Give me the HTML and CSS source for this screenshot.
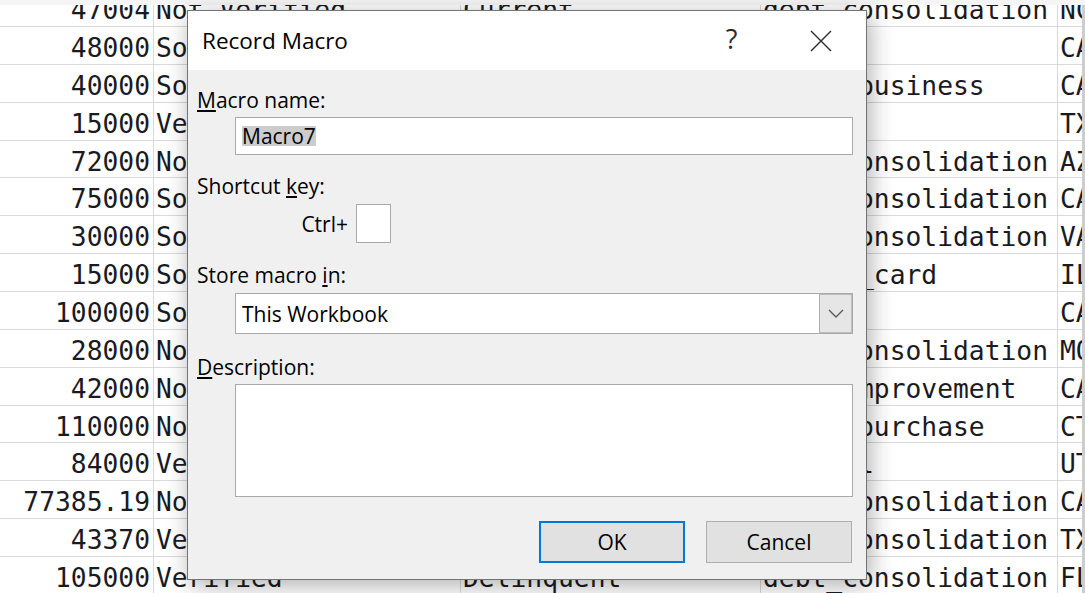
FILE: index.html
```html
<!DOCTYPE html>
<html>
<head>
<meta charset="utf-8">
<link rel="stylesheet" href="styles.css">
</head>
<body>
<div class="app">
  <div class="topstrip"></div>
  <div class="sheet-wrap">
    <div class="sheet">
      <div class="cell num">47004</div><div class="cell">Not Verified</div><div class="cell">Current</div><div class="cell">debt_consolidation</div><div class="cell last">NC</div>
      <div class="cell num">48000</div><div class="cell">Source Verified</div><div class="cell">Current</div><div class="cell">car</div><div class="cell last">CA</div>
      <div class="cell num">40000</div><div class="cell">Source Verified</div><div class="cell">Current</div><div class="cell">small_business</div><div class="cell last">CA</div>
      <div class="cell num">15000</div><div class="cell">Verified</div><div class="cell">Current</div><div class="cell">other</div><div class="cell last">TX</div>
      <div class="cell num">72000</div><div class="cell">Not Verified</div><div class="cell">Current</div><div class="cell">debt_consolidation</div><div class="cell last">AZ</div>
      <div class="cell num">75000</div><div class="cell">Source Verified</div><div class="cell">Current</div><div class="cell">debt_consolidation</div><div class="cell last">CA</div>
      <div class="cell num">30000</div><div class="cell">Source Verified</div><div class="cell">Current</div><div class="cell">debt_consolidation</div><div class="cell last">VA</div>
      <div class="cell num">15000</div><div class="cell">Source Verified</div><div class="cell">Current</div><div class="cell">credit_card</div><div class="cell last">IL</div>
      <div class="cell num">100000</div><div class="cell">Source Verified</div><div class="cell">Current</div><div class="cell">other</div><div class="cell last">CA</div>
      <div class="cell num">28000</div><div class="cell">Not Verified</div><div class="cell">Current</div><div class="cell">debt_consolidation</div><div class="cell last">MO</div>
      <div class="cell num">42000</div><div class="cell">Not Verified</div><div class="cell">Current</div><div class="cell">home_improvement</div><div class="cell last">CA</div>
      <div class="cell num">110000</div><div class="cell">Not Verified</div><div class="cell">Current</div><div class="cell">major_purchase</div><div class="cell last">CT</div>
      <div class="cell num">84000</div><div class="cell">Verified</div><div class="cell">Current</div><div class="cell">medical</div><div class="cell last">UT</div>
      <div class="cell num">77385.19</div><div class="cell">Not Verified</div><div class="cell">Current</div><div class="cell">debt_consolidation</div><div class="cell last">CA</div>
      <div class="cell num">43370</div><div class="cell">Verified</div><div class="cell">Current</div><div class="cell">debt_consolidation</div><div class="cell last">TX</div>
      <div class="cell num">105000</div><div class="cell">Verified</div><div class="cell">Delinquent</div><div class="cell">debt_consolidation</div><div class="cell last">FL</div>
    </div>
    <div class="vscroll"></div>
  </div>

  <div class="dialog">
    <div class="titlebar">
      <div class="title">Record Macro</div>
      <div class="tbtn help">?</div>
      <div class="tbtn close">
        <svg width="22" height="22" viewBox="0 0 22 22"><path d="M1 1 L21 21 M21 1 L1 21" stroke="#2b2b2b" stroke-width="1.4" fill="none"/></svg>
      </div>
    </div>
    <div class="dbody">
      <div class="lbl"><u>M</u>acro name:</div>
      <div class="field input1"><span class="sel">Macro7</span></div>
      <div class="lbl gap17">Shortcut <u>k</u>ey:</div>
      <div class="ctrlrow">
        <span class="ctrl">Ctrl+</span>
        <span class="keybox"></span>
      </div>
      <div class="lbl gap18">Store macro <u>i</u>n:</div>
      <div class="field select">
        <span class="seltext">This Workbook</span>
        <span class="dropbtn">
          <svg width="16" height="9" viewBox="0 0 16 9"><path d="M1 1 L8 8 L15 1" stroke="#5a5a5a" stroke-width="1.4" fill="none"/></svg>
        </span>
      </div>
      <div class="lbl gap19"><u>D</u>escription:</div>
      <div class="field textarea"></div>
      <div class="buttons">
        <div class="btn ok">OK</div>
        <div class="btn cancel">Cancel</div>
      </div>
    </div>
  </div>
</div>
</body>
</html>
```

FILE: styles.css
```css
html, body {
  margin: 0;
  padding: 0;
}
body {
  width: 1085px;
  height: 593px;
  overflow: hidden;
  background: #ffffff;
  font-family: "Open Sans", "Noto Sans", sans-serif;
}
.app {
  position: relative;
  width: 1085px;
  height: 593px;
  overflow: hidden;
}
.topstrip {
  height: 5px;
  background: #f5f5f5;
}
.sheet-wrap {
  display: flex;
  height: 588px;
  overflow: hidden;
}
.sheet {
  flex: 1;
  margin-top: -15.86px;
  display: grid;
  grid-template-columns: 154px 307px 300px 297px 24px;
  grid-auto-rows: 37.86px;
  align-content: start;
  font-family: "DejaVu Sans Mono", "Liberation Mono", monospace;
  font-size: 26.3px;
  color: #1a1a22;
}
.cell {
  box-sizing: border-box;
  border-right: 1px solid #d9d9d9;
  border-bottom: 1px solid #d9d9d9;
  padding: 6px 2px 0 2px;
  line-height: 30px;
  white-space: nowrap;
  overflow: hidden;
}
.cell.num {
  text-align: right;
  padding-right: 3px;
}
.cell.last {
  border-right: none;
}
.vscroll {
  width: 3px;
  background: #cdcdcd;
}

/* dialog */
.dialog {
  position: absolute;
  left: 187px;
  top: 10px;
  width: 680px;
  height: 570px;
  box-sizing: border-box;
  border: 1px solid #747474;
  background: #f0f0f0;
  box-shadow: 3px 5px 22px rgba(0, 0, 0, 0.32);
  display: flex;
  flex-direction: column;
}
.titlebar {
  height: 59px;
  flex-shrink: 0;
  background: #ffffff;
  display: flex;
  align-items: center;
}
.title {
  flex: 1;
  padding-left: 14px;
  font-size: 22.5px;
  color: #000;
}
.tbtn {
  width: 89px;
  height: 100%;
  display: flex;
  align-items: center;
  justify-content: center;
}
.help {
  font-size: 27px;
  color: #2b2b2b;
  padding-bottom: 4px;
  box-sizing: border-box;
}
.close {
  width: 90px;
}
.dbody {
  flex: 1;
  padding: 16px 13px 0 9px;
  display: flex;
  flex-direction: column;
  color: #000;
}
.lbl {
  font-size: 21px;
  line-height: 28px;
  height: 28px;
  white-space: nowrap;
}
.gap17 { margin-top: 17px; }
.gap18 { margin-top: 18px; }
.gap19 { margin-top: 19px; }
.field {
  margin-left: 38px;
  box-sizing: border-box;
  border: 1px solid #a9a9a9;
  background: #ffffff;
  font-size: 21px;
}
.input1 {
  margin-top: 3px;
  height: 38px;
  display: flex;
  align-items: center;
  padding-left: 6px;
}
.sel {
  display: inline-block;
  height: 20px;
  line-height: 20px;
  background: #cccccc;
  color: #000;
}
.ctrlrow {
  margin-top: 4px;
  height: 39px;
  display: flex;
  align-items: center;
  gap: 8px;
}
.ctrl {
  width: 151px;
  text-align: right;
  font-size: 21px;
}
.keybox {
  width: 35px;
  height: 39px;
  box-sizing: border-box;
  border: 1px solid #a9a9a9;
  background: #ffffff;
}
.select {
  margin-top: 4px;
  height: 41px;
  display: flex;
  align-items: center;
  padding-left: 6px;
}
.seltext {
  flex: 1;
}
.dropbtn {
  align-self: stretch;
  width: 33px;
  box-sizing: border-box;
  border: 1px solid #bcbcbc;
  border-left-color: #b0b0b0;
  background: #e6e6e6;
  display: flex;
  align-items: center;
  justify-content: center;
}
.textarea {
  margin-top: 3px;
  height: 113px;
}
.buttons {
  margin-top: 24px;
  display: flex;
  justify-content: flex-end;
  gap: 21px;
  padding-right: 1px;
}
.btn {
  width: 146px;
  height: 42px;
  box-sizing: border-box;
  background: #e1e1e1;
  display: flex;
  align-items: center;
  justify-content: center;
  font-size: 21px;
  color: #000;
}
.ok {
  border: 2px solid #0078d7;
}
.cancel {
  border: 1px solid #adadad;
}
```
